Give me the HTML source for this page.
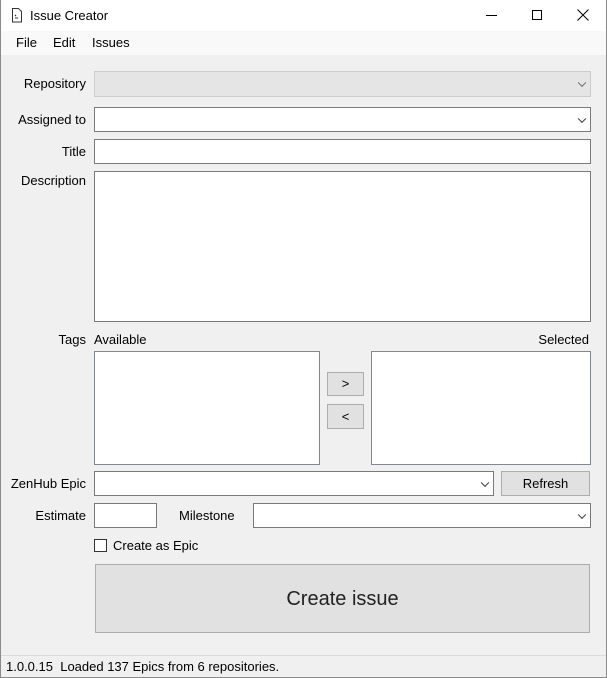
<!DOCTYPE html>
<html><head><style>
*{box-sizing:border-box;margin:0;padding:0}
body{width:607px;height:678px;background:#f0f0f0;font-family:"Liberation Sans",sans-serif;font-size:13px;color:#000;position:relative;overflow:hidden}
.a{position:absolute}
.win{left:0;top:0;width:607px;height:678px;border:1px solid #8a8a8a;border-top:none}
.tb{left:0;top:0;width:607px;height:31px;background:#fff}
.mb{left:1px;top:31px;width:605px;height:24px;background:#f9f9f9}
.box{background:#fff;border:1px solid #7a7a7a}
.lbl{text-align:right;width:86px;left:0}
.btn{background:#e1e1e1;border:1px solid #adadad;text-align:center}
.chev{position:absolute;right:5px;top:50%;width:6px;height:6px;border-right:1px solid #333;border-bottom:1px solid #333;transform:translateY(-70%) rotate(45deg)}
</style></head><body>
<div class="a tb"></div>
<svg class="a" style="left:11px;top:8px" width="12" height="15"><path d="M1.5 .5h6l3 3v10.5h-9z" fill="#fff" stroke="#333"/><path d="M4 7l1 1M5 7l-1 1M4 10h3" stroke="#333"/></svg>
<div class="a" style="left:30px;top:8px">Issue Creator</div>
<div class="a" style="left:486px;top:15px;width:11px;height:1px;background:#000"></div>
<div class="a" style="left:532px;top:10px;width:10px;height:10px;border:1px solid #000"></div>
<svg class="a" style="left:577px;top:9px" width="12" height="12"><path d="M.5 .5l11 11M11.5 .5l-11 11" stroke="#000"/></svg>
<div class="a mb"></div>
<div class="a" style="left:16px;top:35px">File</div>
<div class="a" style="left:53px;top:35px">Edit</div>
<div class="a" style="left:92px;top:35px">Issues</div>

<div class="a lbl" style="top:76px">Repository</div>
<div class="a" style="left:94px;top:71px;width:497px;height:26px;background:#e5e5e5;border:1px solid #ccc"><span class="chev" style="border-color:#666"></span></div>
<div class="a lbl" style="top:112px">Assigned to</div>
<div class="a box" style="left:94px;top:107px;width:497px;height:25px"><span class="chev"></span></div>
<div class="a lbl" style="top:144px">Title</div>
<div class="a box" style="left:94px;top:139px;width:497px;height:25px"></div>
<div class="a lbl" style="top:173px">Description</div>
<div class="a box" style="left:94px;top:171px;width:497px;height:151px"></div>
<div class="a lbl" style="top:332px">Tags</div>
<div class="a" style="left:94px;top:332px">Available</div>
<div class="a" style="left:531px;top:332px;width:58px;text-align:right">Selected</div>
<div class="a box" style="left:94px;top:351px;width:226px;height:114px;border-color:#828790"></div>
<div class="a box" style="left:371px;top:351px;width:220px;height:114px;border-color:#828790"></div>
<div class="a btn" style="left:327px;top:372px;width:37px;height:24px;line-height:22px">&gt;</div>
<div class="a btn" style="left:327px;top:404px;width:37px;height:25px;line-height:23px">&lt;</div>
<div class="a lbl" style="top:476px">ZenHub Epic</div>
<div class="a box" style="left:94px;top:471px;width:400px;height:25px"><span class="chev"></span></div>
<div class="a btn" style="left:501px;top:471px;width:89px;height:25px;line-height:23px">Refresh</div>
<div class="a lbl" style="top:508px">Estimate</div>
<div class="a box" style="left:94px;top:503px;width:63px;height:25px"></div>
<div class="a" style="left:179px;top:508px">Milestone</div>
<div class="a box" style="left:253px;top:503px;width:338px;height:25px"><span class="chev"></span></div>
<div class="a" style="left:94px;top:539px;width:13px;height:13px;background:#fff;border:1px solid #333"></div>
<div class="a" style="left:113px;top:538px">Create as Epic</div>
<div class="a btn" style="left:95px;top:564px;width:495px;height:69px;line-height:69px;font-size:20px;color:#222">Create issue</div>
<div class="a" style="left:1px;top:655px;width:605px;height:1px;background:#dadada"></div>
<div class="a" style="left:6px;top:659px">1.0.0.15&nbsp; Loaded 137 Epics from 6 repositories.</div>
<div class="a win"></div>
</body></html>
